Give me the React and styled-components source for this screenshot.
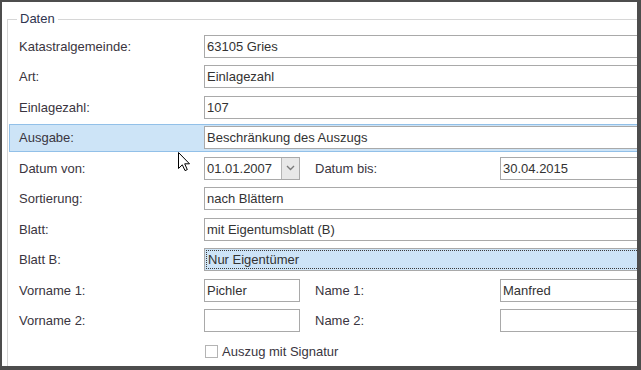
import styled, { createGlobalStyle } from "styled-components";

const GlobalStyle = createGlobalStyle`
  html, body { margin: 0; padding: 0; background: #fff; }
  body { font-family: "Liberation Sans", Arial, sans-serif; font-size: 13px; color: #333; }
`;

const Frame = styled.div`
  position: relative;
  box-sizing: border-box;
  width: 641px;
  height: 370px;
  border-style: solid;
  border-color: #4d4d4d;
  border-width: 2px 4px 4px 2px;
  padding: 9px 0 0 5px;
  overflow: hidden;
  background: #fff;
`;

const Group = styled.fieldset`
  margin: 0;
  padding: 4px 0 0 1px;
  width: 720px;
  min-width: 0;
  border: 1px solid #d6d6d6;
  border-bottom: none;
`;

const Legend = styled.legend`
  margin-left: 8px;
  padding: 0 3px;
  line-height: 16px;
  color: #2f3550;
`;

const Form = styled.div`
  display: flex;
  flex-direction: column;
`;

const Row = styled.div`
  box-sizing: border-box;
  display: flex;
  align-items: center;
  height: ${(p) => (p.$active ? "28px" : "30.5px")};
  margin: ${(p) => (p.$active ? "1.25px 0" : "0")};
  padding-left: ${(p) => (p.$active ? "9px" : "10px")};
  background: ${(p) => (p.$active ? "#cde4f7" : "transparent")};
  border: ${(p) => (p.$active ? "1px solid #92c0e8" : "none")};
  border-right: none;
`;

const Label = styled.span`
  flex: none;
  width: ${(p) => (p.$second ? "185px" : "185px")};
  margin-left: ${(p) => (p.$second ? "15px" : "0")};
  color: #3a3540;
`;

const Input = styled.div`
  box-sizing: border-box;
  height: 23px;
  flex: ${(p) => (p.$small ? "none" : "1")};
  width: ${(p) => (p.$small ? "96px" : "auto")};
  border: 1px solid #a9a9a9;
  background: #fff;
  padding-left: 2px;
  line-height: 21px;
  color: #333;
  white-space: nowrap;
`;

const Select = styled.div`
  box-sizing: border-box;
  height: 23px;
  flex: 1;
  border: 1px solid #a9a9a9;
  background: #cde4f7;
  padding: 1px;
`;

const FocusRect = styled.div`
  box-sizing: border-box;
  height: 100%;
  border: 1px dotted #3a3a3a;
  padding-left: 1px;
  line-height: 17px;
  color: #333;
`;

const DateBox = styled.div`
  box-sizing: border-box;
  flex: none;
  width: 96px;
  height: 23px;
  display: flex;
  border: 1px solid #a9a9a9;
  background: #fff;
`;

const DateText = styled.span`
  flex: 1;
  padding-left: 2px;
  line-height: 21px;
`;

const DropButton = styled.span`
  flex: none;
  width: 17px;
  display: flex;
  align-items: center;
  justify-content: center;
  background: #e8e8e8;
  border-left: 1px solid #b5b5b5;
`;

const CheckRow = styled.label`
  display: flex;
  align-items: center;
  gap: 4px;
  margin-left: 195px;
  height: 30.5px;
  color: #3a3540;
`;

const Box = styled.span`
  box-sizing: border-box;
  width: 13px;
  height: 13px;
  border: 1px solid #b4b4b4;
  background: #fff;
  margin-left: 1px;
`;

const Cursor = styled.svg`
  position: absolute;
  left: 174px;
  top: 148px;
`;

const Chevron = () => (
  <svg width="9" height="6" viewBox="0 0 9 6">
    <path d="M1 1 L4.5 4.5 L8 1" fill="none" stroke="#7a7a7a" strokeWidth="1.4" />
  </svg>
);

const Field = ({ label, value }) => (
  <Row>
    <Label>{label}</Label>
    <Input>{value}</Input>
  </Row>
);

export default function App() {
  return (
    <>
      <GlobalStyle />
      <Frame>
        <Group>
          <Legend>Daten</Legend>
          <Form>
            <Field label="Katastralgemeinde:" value="63105 Gries" />
            <Field label="Art:" value="Einlagezahl" />
            <Field label="Einlagezahl:" value="107" />
            <Row $active>
              <Label>Ausgabe:</Label>
              <Input>Beschränkung des Auszugs</Input>
            </Row>
            <Row>
              <Label>Datum von:</Label>
              <DateBox>
                <DateText>01.01.2007</DateText>
                <DropButton>
                  <Chevron />
                </DropButton>
              </DateBox>
              <Label $second>Datum bis:</Label>
              <Input>30.04.2015</Input>
            </Row>
            <Field label="Sortierung:" value="nach Blättern" />
            <Field label="Blatt:" value="mit Eigentumsblatt (B)" />
            <Row>
              <Label>Blatt B:</Label>
              <Select>
                <FocusRect>Nur Eigentümer</FocusRect>
              </Select>
            </Row>
            <Row>
              <Label>Vorname 1:</Label>
              <Input $small>Pichler</Input>
              <Label $second>Name 1:</Label>
              <Input>Manfred</Input>
            </Row>
            <Row>
              <Label>Vorname 2:</Label>
              <Input $small />
              <Label $second>Name 2:</Label>
              <Input />
            </Row>
            <CheckRow>
              <Box />
              Auszug mit Signatur
            </CheckRow>
          </Form>
        </Group>
        <Cursor width="14" height="22" viewBox="0 0 14 22">
          <path
            d="M2.5 2.5 L2.5 18.5 L6.3 14.8 L9 20.6 L11.3 19.6 L8.7 13.8 L13.5 13.8 Z"
            fill="#fff"
            stroke="#000"
            strokeWidth="1"
            strokeLinejoin="miter"
          />
        </Cursor>
      </Frame>
    </>
  );
}
